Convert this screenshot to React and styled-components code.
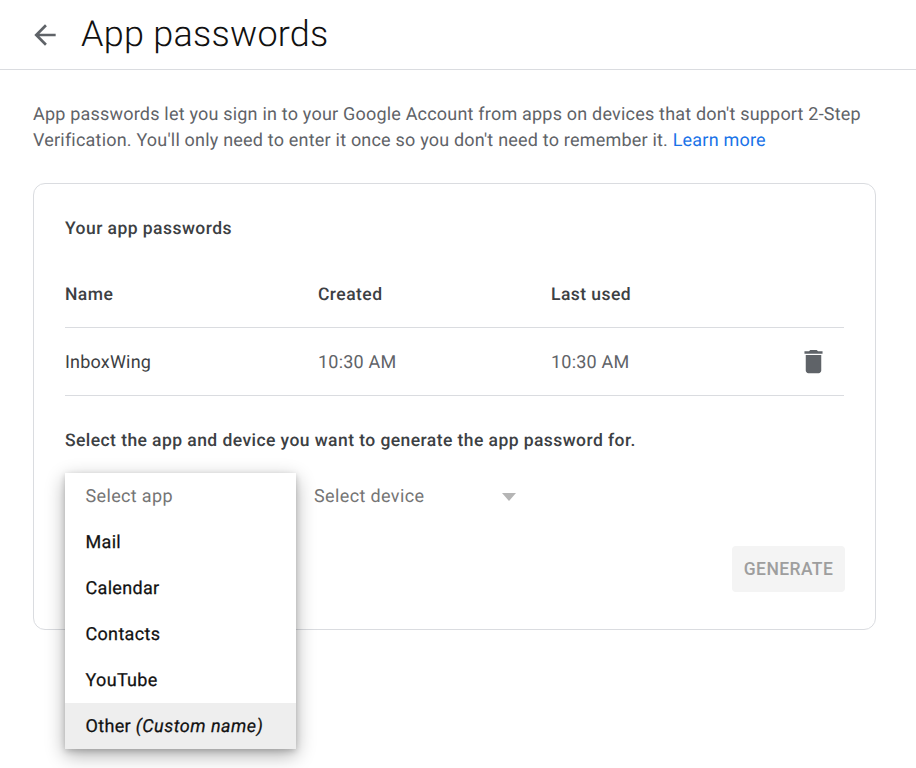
import React from "react";
import styled, { createGlobalStyle } from "styled-components";

const Global = createGlobalStyle`
  html, body { margin: 0; padding: 0; background: #fff; }
  body { font-family: Roboto, "Liberation Sans", sans-serif; overflow: hidden; height: 768px; text-rendering: geometricPrecision; }
`;
const Page = styled.div`width: 916px; height: 768px; overflow: hidden;`;
const Header = styled.header`
  height: 69px; display: flex; align-items: center; border-bottom: 1px solid #dadce0;
  padding-left: 29px;
`;
const Back = styled.svg`width: 32px; height: 32px; fill: #5f6368; flex: none;`;
const Title = styled.h1`
  margin: 0 0 0 20px; font-family: Roboto, sans-serif; font-weight: 300; font-size: 36px;
  line-height: 69px; color: #111; letter-spacing: 0.25px;
`;
const Intro = styled.p`
  margin: 32px 33px 0; font-size: 18px; line-height: 26px; color: #5f6368; letter-spacing: 0.2px;
`;
const LearnMore = styled.a`color: #1a73e8; text-decoration: none;`;
const Card = styled.section`
  margin: 29px 40px 0 33px; height: 445px; box-sizing: content-box; width: 841px;
  border: 1px solid #dadce0; border-radius: 12px; padding: 0; position: relative;
`;
const CardInner = styled.div`padding: 33px 31px 0 31px;`;
const CardTitle = styled.h2`
  margin: 0; font-size: 17.5px; line-height: 24px; font-weight: 500; color: #3c4043; letter-spacing: 0.45px;
`;
const Row = styled.div`
  display: grid; grid-template-columns: 253px 233px 1fr 62px; align-items: center; height: ${p => p.$h}px;
  box-sizing: border-box; padding-top: 2px; border-bottom: 1px solid #dadce0; margin-top: ${p => p.$mt || 0}px;
  font-size: 18px; color: #3c4043; letter-spacing: 0.2px;
`;
const HeadCell = styled.div`font-weight: 500; font-size: 17.5px; color: #3c4043; letter-spacing: 0.45px;`;
const NameCell = styled.div`color: #3c4043;`;
const TimeCell = styled.div`color: #5f6368;`;
const Trash = styled.svg`width: 31px; height: 31px; fill: #5f6368; justify-self: center; margin-top: -2px;`;
const Prompt = styled.p`
  margin: 33px 0 0; font-size: 17.5px; line-height: 24px; font-weight: 500; color: #3c4043; letter-spacing: 0.43px;
`;
const Selects = styled.div`display: flex; margin-top: 20px; height: 46px; align-items: center; padding-left: 249px;`;
const SelectBox = styled.div`
  width: 202px; display: flex; align-items: center; justify-content: space-between; font-size: 18px;
  color: #757575; letter-spacing: 0.37px;
`;
const Caret = styled.span`
  width: 0; height: 0; border-left: 7.5px solid transparent; border-right: 7.5px solid transparent;
  border-top: 8px solid #b5b5b5; margin-top: 1px;
`;
const Actions = styled.div`display: flex; justify-content: flex-end;`;
const Generate = styled.button`
  width: 113px; height: 46px; border: 0; border-radius: 4px; background: #f4f4f4; color: #9e9e9e;
  font-family: inherit; font-size: 17.5px; font-weight: 500; letter-spacing: 0.4px; padding: 0; margin: 27px -1px 0 0;
`;
const Menu = styled.ul`
  position: absolute; left: 31px; top: 289px; width: 231px; margin: 0; padding: 0; list-style: none;
  background: #fff; box-shadow: 0 6px 18px rgba(0,0,0,.32), 0 2px 6px rgba(0,0,0,.18);
`;
const Option = styled.li`
  height: 46px; display: flex; align-items: center; padding-left: 20.5px; font-size: 18px; font-weight: 400;
  letter-spacing: ${p => p.$muted ? "0.34px" : "0.32px"}; color: ${p => p.$muted ? "#757575" : "#111"};
  -webkit-text-stroke: ${p => p.$muted ? "0" : "0.25px"};
  background: ${p => p.$active ? "#eeeeee" : "#fff"};
  white-space: pre;
  em { font-style: italic; letter-spacing: 0.5px; }
`;

export default function App() {
  return (
    <Page>
      <Global />
      <Header>
        <Back viewBox="0 0 24 24"><path d="M20 11H7.83l5.59-5.59L12 4l-8 8 8 8 1.41-1.41L7.83 13H20v-2z" /></Back>
        <Title>App passwords</Title>
      </Header>
      <Intro>
        App passwords let you sign in to your Google Account from apps on devices that don't support 2-Step Verification. You'll only need to enter it once so you don't need to remember it. <LearnMore href="#">Learn more</LearnMore>
      </Intro>
      <Card>
        <CardInner>
          <CardTitle>Your app passwords</CardTitle>
          <Row $h="68" $mt="19">
            <HeadCell>Name</HeadCell><HeadCell>Created</HeadCell><HeadCell>Last used</HeadCell><span />
          </Row>
          <Row $h="68">
            <NameCell>InboxWing</NameCell><TimeCell>10:30 AM</TimeCell><TimeCell>10:30 AM</TimeCell>
            <Trash viewBox="0 0 24 24"><path d="M6 19c0 1.100.9 2 2 2h8c1.100 0 2-.9 2-2V7H6v12zM19 4h-3.500l-1-1h-5l-1 1H5v2h14V4z" /></Trash>
          </Row>
          <Prompt>Select the app and device you want to generate the app password for.</Prompt>
          <Selects>
            <SelectBox>Select device<Caret /></SelectBox>
          </Selects>
          <Actions><Generate>GENERATE</Generate></Actions>
        </CardInner>
        <Menu>
          <Option $muted>Select app</Option>
          <Option>Mail</Option>
          <Option>Calendar</Option>
          <Option>Contacts</Option>
          <Option>YouTube</Option>
          <Option $active>Other <em>(Custom name)</em></Option>
        </Menu>
      </Card>
    </Page>
  );
}
